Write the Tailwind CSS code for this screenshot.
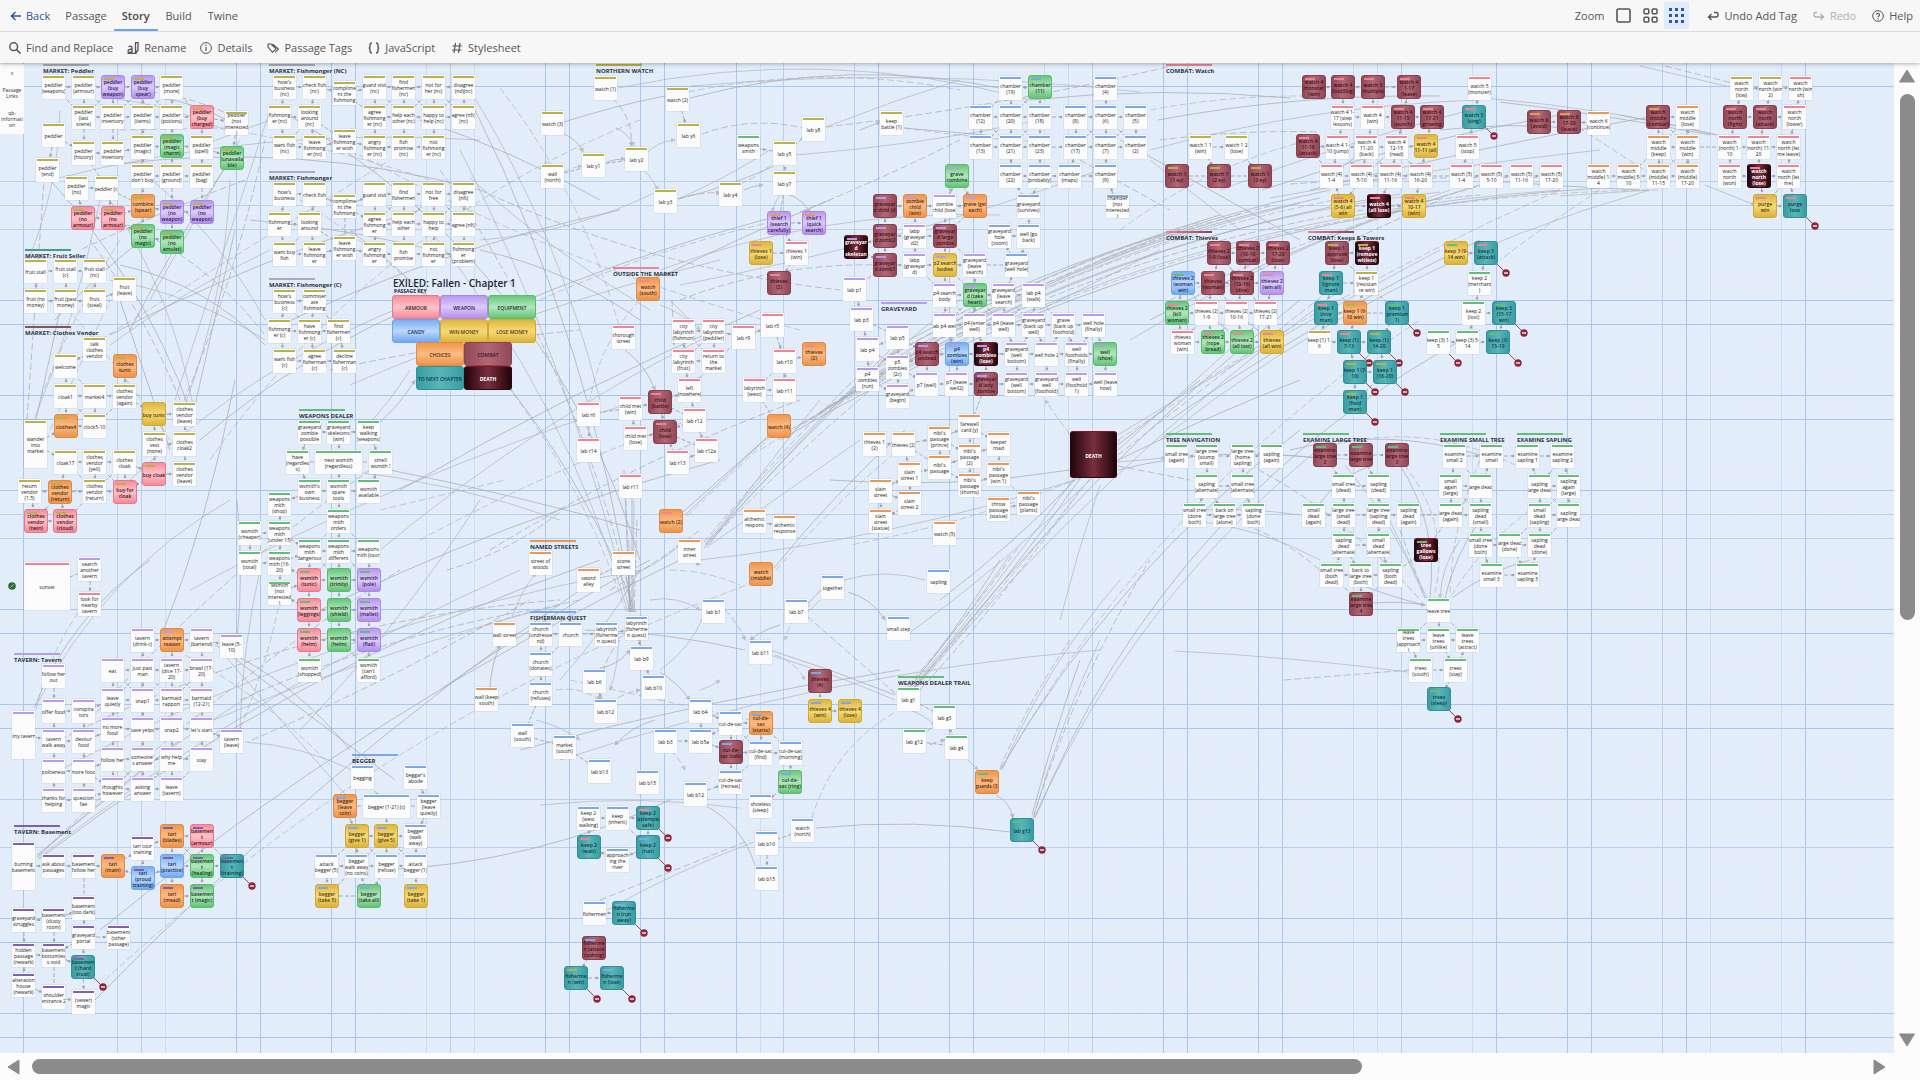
<!DOCTYPE html>
<html lang="en">
<head>
<meta charset="utf-8">
<title>EXILED: Fallen - Chapter 1</title>
<script src="https://cdn.jsdelivr.net/npm/@tailwindcss/browser@4"></script>
</head>
<body class="flex h-screen flex-col overflow-hidden bg-[#f7f7f7] font-['Open_Sans','Noto_Sans',sans-serif] text-[11px] leading-4 text-[#555]">
<header class="relative z-10 bg-[#f7f7f7] shadow-[0_1px_4px_rgba(0,0,0,0.3)]">
  <div class="flex h-8 items-stretch justify-between border-b border-[#dcdcdc]">
    <nav class="flex items-stretch pl-0.5">
      <button class="flex items-center gap-1 px-2 text-[#2f5592]">
        <svg class="size-3" viewBox="0 0 12 12" fill="none" stroke="currentColor" stroke-width="1.5"><path d="M11 6H1.5M5.5 2L1.5 6l4 4"/></svg>Back</button>
      <button class="px-[7px]">Passage</button>
      <button class="border-b-2 border-[#6ba3ee] px-2 pt-0.5 font-semibold text-[#4a4a4a]">Story</button>
      <button class="px-2">Build</button>
      <button class="px-2">Twine</button>
    </nav>
    <div class="flex items-stretch">
      <span class="flex items-center pr-1.5">Zoom</span>
      <button class="px-1.5" aria-label="Show large passages"><svg class="size-[15px]" viewBox="0 0 15 15" fill="none" stroke="#555" stroke-width="1.6"><rect x="1" y="1" width="13" height="13" rx="1.5"/></svg></button>
      <button class="px-1.5" aria-label="Show medium passages"><svg class="size-[15px]" viewBox="0 0 15 15" fill="none" stroke="#555" stroke-width="1.5"><rect x="1" y="1" width="4.8" height="4.8" rx="1"/><rect x="9.2" y="1" width="4.8" height="4.8" rx="1"/><rect x="1" y="9.2" width="4.8" height="4.8" rx="1"/><rect x="9.2" y="9.2" width="4.8" height="4.8" rx="1"/></svg></button>
      <button class="my-0.5 bg-[#e0ecfb] px-[5px]" aria-label="Show small passages"><svg class="size-[15px]" viewBox="0 0 15 15" fill="#2a56a5"><path d="M0 0h3v3H0zM6 0h3v3H6zM12 0h3v3h-3zM0 6h3v3H0zM6 6h3v3H6zM12 6h3v3h-3zM0 12h3v3H0zM6 12h3v3H6zM12 12h3v3h-3z"/></svg></button>
      <button class="ml-2.5 flex items-center gap-[5px] px-2"><svg class="size-3" viewBox="0 0 12 12" fill="none" stroke="currentColor" stroke-width="1.4"><path d="M4.5 4L1.5 7l3 3M1.5 7H9a2 2 0 0 0 2-2V4a1.500 1.500 0 0 0-1.500-1.500H7"/></svg>Undo Add Tag</button>
      <button disabled class="flex items-center gap-[5px] px-2 text-[#b0b0b0]"><svg class="size-3" viewBox="0 0 12 12" fill="none" stroke="currentColor" stroke-width="1.4"><path d="M7.500 4l3 3-3 3M10.500 7H3a2 2 0 0 1-2-2V4a1.500 1.500 0 0 1 1.500-1.500H4"/></svg>Redo</button>
      <button class="flex items-center gap-[5px] pr-[7px] pl-2"><svg class="size-3" viewBox="0 0 12 12" fill="none" stroke="currentColor"><circle cx="6" cy="6" r="5.300"/><path d="M4.500 4.800a1.500 1.500 0 1 1 2 1.500q-.5.200-.5.900M6 8.200v1.200" stroke-width="1.100"/></svg>Help</button>
    </div>
  </div>
  <div class="flex h-[31px] items-stretch pl-0.5">
    <button class="flex items-center gap-[5px] px-[7px]"><svg class="size-3" viewBox="0 0 12 12" fill="none" stroke="currentColor" stroke-width="1.5"><circle cx="4.700" cy="4.700" r="3.900"/><path d="M7.600 7.600l4 4"/></svg>Find and Replace</button>
    <button class="flex items-center gap-[5px] px-[7px]"><svg class="size-3" viewBox="0 0 12 12" fill="none" stroke="currentColor" stroke-width="1.3"><path d="M1.500 4.600q3.500-1 3.500 1v5M5 7.300q-4-.3-4 1.700 0 1.500 1.700 1.500Q5 10.500 5 8.500M.5 11.300h8.500V8.500M8.500.7H11v7.600L9 10.500H8.500z"/></svg>Rename</button>
    <button class="flex items-center gap-[5px] px-[7px]"><svg class="size-3" viewBox="0 0 12 12" fill="none" stroke="currentColor"><circle cx="6" cy="6" r="5.400"/><path d="M6 5v4M6 2.800v1.200" stroke-width="1.200"/></svg>Details</button>
    <button class="flex items-center gap-[5px] px-2"><svg class="size-3" viewBox="0 0 12 12" fill="none" stroke="currentColor" stroke-width="1.100"><path d="M1 2v3l4.500 5.300L9 6.800 4 2zM5.500 2l6 5L8 10.300M3 4v.3"/></svg>Passage Tags</button>
    <button class="flex items-center gap-[5px] px-2"><svg class="size-3" viewBox="0 0 12 12" fill="none" stroke="currentColor" stroke-width="1.300"><path d="M4 1Q2 1 2 3v1.500Q2 6 .7 6 2 6 2 7.500V9q0 2 2 2M8 1q2 0 2 2v1.500Q10 6 11.300 6 10 6 10 7.500V9q0 2-2 2"/></svg>JavaScript</button>
    <button class="flex items-center gap-[5px] px-2"><svg class="size-3" viewBox="0 0 12 12" fill="none" stroke="currentColor" stroke-width="1.200"><path d="M4.500 1L3 11M9 1L7.500 11M1.500 4H11M1 8h9.500"/></svg>Stylesheet</button>
  </div>
</header>

<div class="flex min-h-0 flex-1">
  <main id="board" class="relative min-w-0 flex-1 overflow-hidden bg-[#e4eefb]">
    <svg class="absolute inset-0 size-full" aria-hidden="true">
      <defs><pattern id="fine" width="23.75" height="23.75" patternUnits="userSpaceOnUse"><path d="M4.750 0V23.750M9.500 0V23.750M14.250 0V23.750M19 0V23.750M0 4.750H23.750M0 9.500H23.750M0 14.250H23.750M0 19H23.750" stroke="#d9e5f6" stroke-width="1"/></pattern>
      <marker id="tip" viewBox="0 0 6 6" refX="5" refY="3" markerWidth="5" markerHeight="5" orient="auto"><path d="M0 0L6 3L0 6z" fill="#a9adb6"/></marker></defs>
      <rect width="100%" height="100%" fill="url(#fine)" opacity="0.3"/>
      <g id="grid"></g><g id="links" fill="none" stroke="#a9acb3"></g>
    </svg>
  </main>
  <div class="flex w-[26px] flex-col items-center bg-[#fcfcfc]" aria-hidden="true">
    <svg class="mt-1.5 h-[15px] w-4" viewBox="0 0 16 15" fill="#8b8b8b"><path d="M8 1L15.500 13H.5z" stroke="#8b8b8b" stroke-linejoin="round"/></svg>
    <div class="mt-2.5 h-[526px] w-[15px] rounded-full bg-[#8b8b8b]"></div>
    <svg class="mt-auto mb-1.5 h-[15px] w-4" viewBox="0 0 16 15" fill="#8b8b8b"><path d="M8 14L15.500 2H.5z" stroke="#8b8b8b" stroke-linejoin="round"/></svg>
  </div>
</div>
<footer class="flex h-[27px] items-center bg-[#fcfcfc] pr-[33px] pl-1.5" aria-hidden="true">
  <svg class="h-4 w-[15px]" viewBox="0 0 15 16" fill="#8b8b8b"><path d="M2 8L13 1V15z" stroke="#8b8b8b" stroke-linejoin="round"/></svg>
  <div class="ml-[11px] flex-1"><div class="h-[15px] w-[72.3%] rounded-full bg-[#8b8b8b]"></div></div>
  <svg class="h-4 w-[15px]" viewBox="0 0 15 16" fill="#8b8b8b"><path d="M13 8L2 1V15z" stroke="#8b8b8b" stroke-linejoin="round"/></svg>
</footer>

<script>
const TOP = 63, board = document.getElementById('board');

// Major grid lines: position, strength
const vert = '24:3 118:2 142:2 166:1 237:3 261:3 332:3 356:3 427:1 451:2 475:1 546:3 570:3 641:3 665:3 737:3 761:1 784:2 855:2 879:3 950:3 974:3 1045:1 1069:1 1093:2 1164:3 1188:3 1259:3 1283:3 1354:1 1378:1 1402:2 1473:1 1497:3 1568:3 1592:3 1663:2 1687:3 1711:1 1782:1 1806:3';
const horz = '86:3 181:2 205:2 229:2 300:3 324:3 395:3 419:3 490:3 514:2 538:2 609:3 633:3 704:3 728:3 799:2 847:2 918:3 942:3 1013:3 1037:3';
const tone = {1:'#ccdcf2',2:'#b9cfee',3:'#a9c6ec'};
let g = '';
vert.split(' ').forEach(s=>{const [p,k]=s.split(':'); g+=`<path d="M${+p-.5} 0V2000" stroke="${tone[k]}"/>`});
horz.split(' ').forEach(s=>{const [p,k]=s.split(':'); g+=`<path d="M0 ${p-TOP+.5}H4000" stroke="${tone[k]}"/>`});
document.getElementById('grid').innerHTML = g;

const skin = {
  w:'bg-[#fbfbfb] text-[#1e1e1e] shadow-[0_0_1px_rgba(0,0,0,0.25)] font-medium',
  r:'rounded-[3px] border border-[#e8788a] bg-linear-to-b from-[#f58e9c] via-[#fcc3ca] to-[#f48999] text-[#3d1218] font-semibold',
  p:'rounded-[3px] border border-[#ad87e6] bg-linear-to-b from-[#ba98ee] via-[#dccbfa] to-[#b48fec] text-[#2c1a4d] font-semibold',
  g:'rounded-[3px] border border-[#58bd6c] bg-linear-to-b from-[#67c77a] via-[#b4e5bd] to-[#62c376] text-[#123a1b] font-semibold',
  b:'rounded-[3px] border border-[#6fa5ec] bg-linear-to-b from-[#79adf2] via-[#bcd8fb] to-[#70a7f0] text-[#142c50] font-semibold',
  y:'rounded-[3px] border border-[#d3a92f] bg-linear-to-b from-[#dcb640] via-[#f7da76] to-[#dbb33a] text-[#4b390b] font-semibold',
  o:'rounded-[3px] border border-[#e08a43] bg-linear-to-b from-[#ee974e] via-[#fbbb83] to-[#ec934b] text-[#522a0c] font-semibold',
  d:'rounded-[3px] border border-[#86404f] bg-linear-to-r from-[#914857] via-[#b26775] to-[#914857] text-[#3c101a] font-semibold',
  t:'rounded-[3px] border border-[#318f96] bg-linear-to-r from-[#3a9da4] via-[#58b5b8] to-[#3a9da4] text-[#0e3a40] font-semibold',
  k:'rounded-[3px] border border-[#2c0810] border-t-[#8a1420] bg-linear-to-r from-[#23060c] via-[#7a2f3e] to-[#23060c] text-white font-bold'
};
const bar = {
  y:'bg-[#b9b149]', p:'bg-[#b99bec]', g:'bg-[#64bd78]', r:'bg-[#ef8593]', o:'bg-[#e8995a]', b:'bg-[#7ba8e8]', v:'bg-[#7f5fae]'
};
const nodes = [];
// region(originX, originY, rows): "x,y skin+bar text", positions in thirds of a pixel from the origin
function region(ox, oy, data) {
  data.trim().split('|').forEach(s => {
    const m = s.trim().match(/^(\d+),(\d+) (\w)(\w) ?(\d+x\d+)? ?(.*)$/s);
    if (!m) return;
    const [w,h] = m[5] ? m[5].split('x').map(Number) : [24,24];
    nodes.push({x:Math.round(ox+m[1]/3), y:Math.round(oy+m[2]/3), k:m[3], s:m[4], w, h, t:m[6].trim()});
  });
}
region(0,0,`125,225 wy peddler (weapons)|215,225 wy peddler (armour)|303,225 py peddler (buy weapon)|393,225 py peddler (buy spear)|481,225 wy peddler (more)|
215,316 wy peddler (last scene)|303,316 wy peddler inventory|393,316 wy peddler (items)|481,316 wy peddler (potions)|570,314 ro peddler (buy charged)|675,333 wy peddler (not interested)|
125,369 wy peddler|215,423 wy peddler (history)|303,423 wy peddler inventory|393,404 wy peddler (magic)|481,402 gy peddler (magic charm)|570,404 wy peddler (spell)|660,438 gy peddler (unavailable)|107,475 wy peddler (end)|
393,492 wy peddler (don't buy)|481,492 wy peddler (ground)|570,492 wy peddler (bag)|196,528 wy peddler (no)|285,528 wy peddler (c)|393,583 oy combine (spear)|214,617 ry peddler (no armour)|303,617 ry peddler (no armour)|481,600 py peddler (no weapon)|570,600 py peddler (no weapon)|393,672 gy peddler (no magic)|481,690 gy peddler (no amulet)|
820,225 wy how's business (nc)|908,225 wy check fish (nc)|1000,243 wy compliment the fishmong|1088,225 wy guard visit (nc)|1177,225 wy find fishermen (nc)|1267,225 wy not for her (nc)|1356,225 wy disagree (nd)(nc)|
803,316 wy fishmong er (nc)|893,316 wy looking around (nc)|1088,316 wy agree fishmong er (nc)|1177,316 wy help each other (nc)|1267,316 wy happy to help (nc)|1356,316 wy agree (nft) (nc)|
820,404 wy want fish (nc)|908,404 wy leave fishmong er (nc)|1000,387 wy leave fishmong er wish|1088,404 wy angry fishmong er (nc)|1177,404 wy fish promise (nc)|1267,404 wy not fishmong er (nc)|
820,547 wy how's business|908,547 wy check fish|1000,583 wy compliment the fishmong|1088,547 wy guard visit|1177,547 wy find fishermen|1267,547 wy not for free|1356,547 wy disagree (nft)|
803,636 wy fishmong er|893,636 wy looking around|1088,636 wy agree fishmong er|1177,636 wy help each other|1267,636 wy happy to help|1356,636 wy agree (nft)|
820,725 wy want buy fish|908,725 wy leave fishmong er|1000,709 wy leave fishmong er wish|1088,725 wy angry fishmong er|1177,725 wy fish promise|1267,725 wy not fishmong er|1356,725 wy fishmong er (problem)`);
region(0,240,`72,58 wy fruit stall|161,58 wy fruit stall (c)|249,58 wy fruit stall (nc)|72,148 wy fruit (no money)|161,148 wy fruit (past money)|249,148 wy fruit (steal)|338,111 wy fruit (leave)|
249,290 wy talk clothes vendor|161,343 wy welcome|338,343 oy clothes tunic|161,432 wy cloak1|249,432 wy market4|338,432 wy clothes vendor (again)|427,487 yy buy tunic|519,487 wy clothes vendor (leave)|
72,540 wy 24x48 wander into market|161,522 oy clothes4|249,522 wy clock5-10|430,576 wy clothes vest (none)|519,576 wy clothes cloak2|161,630 wy cloak17|249,630 wy clothes vendor (yell)|338,630 wy clothes cloak|427,665 ry buy cloak|519,665 wy clothes vendor (leave)|
54,717 wy return vendor (1,5)|143,719 oy clothes vendor (return)|249,717 wy clothes vendor (return)|338,719 ry buy for cloak|72,808 ry clothes vendor (twin)|160,808 ry clothes vendor (cloud)|
820,148 wy how's business (c)|908,148 wy commiser ate fishmong|803,237 wy fishmong er (c)|893,237 wy have fishmong er (c)|981,237 wy find fishermen (c)|820,326 wy want fish (c)|908,326 wy agree fisherman (c)|1000,326 wy decline fisherman (c)|
893,541 wg graveyard zombie possible|981,541 wg graveyard skeletons (win)|1071,541 wg keep walking (weapons)|857,630 wg have (regardless)|946,630 wg 48x24 next wsmith (regardless)|1106,630 wg smell wsmith !|
893,717 wg wsmith's own business|981,717 wg wsmith spare tools|1071,717 wg wsmith available|803,755 wg weapons mith (shop)|981,808 wg weapons mith orders|714,843 wg wsmith (cheaper)|803,843 wg weapons mith (under 15)|893,897 wg weapons mith dangerous|981,897 wg weapons mith different|1071,897 wg weapons mith (tour)`);
region(0,540,`714,32 wg wsmith (total)|803,32 wg weapons mith (16-20)|803,122 wg wsmith (not interested)|
891,85 rg wsmith (tunic)|981,85 gg wsmith (trinity)|1070,85 pg wsmith (pole)|891,174 rg wsmith (leggings)|981,174 gg wsmith (shield)|1070,174 pg wsmith (mallet)|891,263 rg wsmith (helm)|981,263 gg wsmith (helm)|1070,263 pg wsmith (flail)|893,353 wg wsmith (shopped)|1070,353 wg wsmith (can't afford)|
72,66 wr 47x48 sunset|233,50 wp search another tavern|233,157 wr look for nearby tavern|127,372 wp follow her out|393,265 wp tavern (drink-c)|481,264 op attempt reason|571,265 wp tavern (bartend)|660,283 wp leave (5-10)|
303,353 wp eat|393,353 wp just past man|481,353 wp tavern (dice 17-20)|571,353 wp brawl (17-20)|303,443 wp leave quietly|393,443 wp snap1|481,443 wp barmaid rapport|571,443 wp barmaid (12-21)|
127,478 wp offer food|215,478 wp conspira tors|36,514 wp 24x48 tiny tavern|303,532 wp no more food|393,532 wp save yelps|481,532 wp snap2|571,532 wp let's start|127,568 wp tavern walk away|215,568 wp devour food|660,568 wp tavern (leave)|
303,622 wp follow her|393,622 wp someone's answer|481,622 wp why help me|571,622 wp stay|127,657 wp politeness|215,657 wp more food|303,710 wp thoughts however|393,710 wp asking answer|481,710 wp leave (tavern)|127,745 wp thanks for helping|215,745 wp question fae|
36,907 wv 24x48 burning basement|127,942 wv ask about passages|215,942 wv basement follow her|303,941 ov tari (main)|393,889 wv tari tour training|393,977 bv tari (proud training)|481,853 ov tari (blades)|571,853 rv basement (armour)|481,942 bv tari (practice)|571,942 gv basement (healing)|660,942 tv basement (training)|481,1031 ov tari (mead)|571,1031 gv basement (magic)|
36,1103 wv graveyard struggles|127,1103 wv basement (dusty room)|215,1067 wv basement (too dark)|215,1156 wv graveyard portal|322,1156 wv basement (other passage)|36,1210 wv hidden passage (newark)|127,1210 wv basement bottomless void|214,1244 tv basement (hard trust)|36,1298 wv alteration house (newark)|127,1334 wv shoulder entrance 2|215,1351 wv (sewer) magic|
1053,675 wb begging|1212,675 wb beggar's abode|998,763 ob begger (leave coin)|1089,763 wb 48x24 begger (1-21) (c)|1250,763 wb begger (leave quietly)|1034,853 yb begger (give 1)|1123,853 yb begger (give 5)|1212,853 wb begger (walk away)|945,942 wb attack begger (5)|1035,942 wb beggar walk away (no coins)|1124,942 wb begger (refuse)|1213,942 wb attack begger (1)|945,1031 yb begger (take 5)|1071,1031 gb begger (take all)|1213,1031 yb begger (take 1)`);
region(480,0,`342,227 wy watch (1)|557,262 wy watch (2)|182,334 wy watch (3)|182,492 wy wall (north)|307,458 wy lab y1|434,440 wy lab y2|592,370 wy lab y6|522,566 wy lab y3|716,547 wy lab y4|878,512 wy lab y7|878,423 wy lab y5|967,352 wy lab y8|1199,334 wy keep battle (1)|771,406 wg weapons smith|
861,633 po thief 1 (search carefully)|967,633 po thief 1 (quick search)|807,724 yr thieves 1 (lose)|914,724 wr thieves 1 (win)|861,813 dr thieves (2)|1092,706 kp graveyar d skeleton|1180,582 dp graveyar d child (d)|1270,582 op zombie child (win)|1359,583 wp zombie child (lose)|1180,671 dp graveyar d zomb2|1270,671 wp labp (graveyar d2)|1359,671 dp graveyar d large zombie|1180,760 dp graveyar d zomb1|1270,760 wp labp (graveyar d)|1359,760 yp p2 search bodies|1395,492 gp grave combine|468,830 or watch (south)`);
region(800,180,`130,292 wp lab p1|150,382 wp lab p3|167,470 wp lab p4|167,560 wp p4 zombies (run)|258,436 wp lab p5|258,524 wp p5 zombies (2c)|258,612 wp graveyard (begin)|398,310 wp p4 search body|488,310 gp graveyar d (take heart)|577,310 wp graveyard (leave search)|667,310 wp lab p4 (walk)|
398,400 wp lab p4 well|488,400 wp p4 (enter well)|577,400 wp p4 (leave well)|667,400 wp graveyard (back up well)|757,400 wp grave (back up foothold)|846,400 wp well hole (finally)|345,487 dp p4 search undead|435,487 bp p4 zombies (win)|523,487 kp p4 zombies (lose)|616,487 wp graveyard (well bottom)|705,487 wp well hole 2|795,487 wp well footholds (finally)|880,487 gp well (shoe)|
345,577 wp p7 (well)|435,577 wp p7 (leave well2)|523,577 dp graveyar d lady zombie|616,577 wp graveyard (well bottom)|705,577 wp graveyard well (foothold)|795,577 wp well (foothold 1)|883,577 wp well (leave now)|488,220 wp graveyard (leave search)|614,220 wb graveyard (well hole)|563,132 wb graveyard hole (zoom)|652,132 wb well (go back)|652,43 wb graveyard (survives)|918,43 wb chamber (not interested)|488,43 op grave (get each)|
188,756 wo thieves 1 (2)|277,756 wo thieves (2)|383,738 wo nibi's passage (prince)|473,702 wo farewell card (y)|562,756 wo keeper road|473,792 wo nibi's passage (2)|383,826 wo nibi's passage|562,845 wo nibi's passage (win 1)|293,845 wo slain street 1|473,880 wo nibi's passage (thorns)|206,898 wo slain street|293,933 wo slain street 2|206,988 wo slain street (statue)|562,951 wo throw passage (statue)|652,933 wo nibi's passage (plants)|398,1023 wo watch (5)|810,754 kk 47x47 DEATH`);
region(960,0,`116,227 wb chamber (19)|204,225 gb chamber (11)|403,227 wb chamber (4)|27,316 wb chamber (12)|116,316 wb chamber (20)|204,316 wb chamber (18)|312,316 wb chamber (8)|403,316 wb chamber (6)|492,316 wb chamber (5)|27,404 wb chamber (13)|116,404 wb chamber (21)|204,404 wb chamber (23)|312,404 wb chamber (17)|403,404 wb chamber (7)|492,404 wb chamber (2)|116,492 wb chamber (22)|204,492 wb chamber (probably)|294,492 wb chamber (maps)|403,492 wb chamber (9)|
687,404 wy watch 1 1 (win)|794,404 wy watch 1 2 (lose)|615,492 dy watch 1 (1 ey)|740,492 dy watch 1 (2 ey)|865,492 dy watch 1 (3 ey)|
1025,225 dr watch 4 (monster) (win)|1114,225 dr watch 4 (lost)(big)|1203,225 dr watch 5 (multiple)|1310,225 dr watch 4 1-17 (leave)|1114,316 wr watch 4 1-17 (step lessons)|1203,316 wr watch 4 (win)|1292,314 dr watch 4 11-15 (punch)|1381,314 dr watch 4 17-21 growing|1008,403 dr watch 4 11-16 (attack)|1097,404 wr watch 4 1-10 (jump)|1186,404 wr watch 4 11-20 (back)|1274,404 wr watch 4 12-15 (read)|1363,403 yr watch 4 11-11 (all)|1080,492 wr watch (4) 1-4|1169,492 wr watch (4) 5-10|1257,492 wr watch (4) 11-16|1347,492 wr watch (4) 16-20|1114,582 yr watch 4 (5-6) all win|1221,582 kr watch 4 (all lose)|1327,582 yr watch 4 10-17 (win)`);
region(1440,0,`84,227 wr watch 5 (monster)|65,314 tr watch 5 (sing)|47,404 wr watch 5 (stop)|30,492 wr watch (5) 1-4|120,492 wr watch (5) 5-10|209,492 wr watch (5) 11-16|299,492 wr watch (5) 17-20|262,331 do watch 6 (avoid)|351,331 do watch 6 17-20 (leave)|440,334 wo watch 6 (continue)|619,314 do watch middle (combat)|708,316 wo watch middle (lose)|620,404 wo watch middle (keep)|708,404 wo watch middle (win)|441,492 wo watch (middle) 1-4|530,492 wo watch (middle) 5-10|620,492 wo watch (middle) 11-15|708,492 wo watch (middle) 17-20|
870,227 wy watch north (low)|958,227 wy watch north (win 2)|1047,227 wr watch north (win sh)|850,314 dr watch north (fight)|940,314 dr watch north (attack)|1030,316 wr watch north (lower)|833,404 wr watch (north) 1-10|922,404 wr watch (north) 11-20|1012,404 wr watch north (let me leave)|833,492 wr watch north (won)|921,492 kr watch north (lose)|1012,492 wr watch north (let me)|940,582 yr purge win|1029,582 tr purge lose`);
region(1150,220,`170,64 dr thieves 2 1-9 (lose)|259,64 dr thieves 2 (10-16 combat)|348,64 dr thieves 2 17-20 (lose)|63,153 bg thieves 2 (woman win)|152,153 dr thieves (woman)|241,153 dr thieves 2 (10-16) (dice)|331,153 pr thieves 2 (win all)|45,242 gr thieves 2 (kill woman)|135,242 wr thieves (2) 1-9|224,242 wr thieves (2) 10-16|313,242 wr thieves (2) 17-21|63,331 wr thieves woman (win)|152,331 gr thieves 2 (rope bread)|241,331 gr thieves 2 (all lost)|330,331 yr thieves (all win)|
526,64 dy keep 1 approve (lose)|615,64 ky keep 1 (remove witless)|508,153 tr keep 1 (ignore man)|615,153 wy keep 1 (resistan ce win)|491,242 tr keep 1 (nice man)|580,242 oy keep 1 (6-10 win)|705,242 tg keep 1 (premium 1)|473,331 wy keep (1) 1-6|562,331 tr keep (1) 7-13|652,331 ty keep (1) 14-20|580,421 ty keep 1 (7-10)|669,421 ty keep 1 (16-20)|580,510 ty keep 1 (field man)|883,64 yg keep 3 (9-14 win)|972,64 tr keep 3 (attack)|954,153 wg keep 2 (merchant)|937,242 wg keep 2 (lost)|1025,242 tg keep 3 (15-17 win)|830,331 wg keep (3) 1-5|919,331 wg keep (3) 5-14|1008,331 tg keep (3) 15-19|
45,672 wg small tree (again)|134,672 wg large tree (stump small)|242,672 wg large tree (home sapling)|331,672 wg sapling (again)|134,761 wg sapling (alternate)|242,761 wg small tree (alternate)|99,850 wg small tree (done both)|188,850 wg back on large tree (alone)|277,850 wg sapling (done both)|
490,670 dg examine large tree 2|597,670 dg examine large tree|704,670 dg examine large tree 3|879,672 wg examine small 2|990,672 wg examine small|1097,672 wg examine sapling 1|1204,672 wg examine sapling 2|545,761 wg small tree (dead)|652,761 wg sapling (dead)|866,761 wg small again (large)|956,761 wg large dead|1134,761 wg sapling large dead|1222,761 wg sapling again (large)|
455,850 wg small dead (again)|545,850 wg large tree (small dead)|652,850 wg large tree (sapling dead)|740,850 wg sapling dead (again)|866,850 wg large dead (again)|956,850 wg sapling dead (small)|1134,850 wg small dead (sapling)|1222,850 wg sapling large dead|545,939 wg sapling dead (alternate)|652,939 wg small dead (alternate)|956,939 wg small tree (done both)|1045,939 wg large dead (done)|1134,939 wg sapling dead (done)|793,954 kg tree gallows (lose)|
509,1028 wg small tree (both dead)|598,1028 wg back to large tree (both)|687,1028 wg sapling (both dead)|990,1028 wg examine small 3|1097,1028 wg examine sapling 3|597,1117 dg examine large tree 4|830,1135 wg leave tree|740,1225 wg leave trees (approach)|830,1225 wg leave trees (unlike)|919,1225 wg leave trees (attract)|776,1314 wg trees (south)|883,1314 wg trees (stay)|830,1402 tg trees (sleep)`);
region(440,570,`786,86 wb lab b1|1034,86 wb lab b7|928,211 wb lab b11|1144,14 wb together|267,157 wb church (undresse nd)|357,157 wb church|465,157 wb labyrinth (fisherme n quest)|554,139 wb labyrinth (fisherme n quest)|267,245 wb church (donates)|267,335 wb church (refuses)|571,228 wb lab b9|428,298 wb lab b6|606,316 wb lab b10|463,388 wb lab b12|748,388 wb lab b4|838,424 wb cul-de-sac|927,422 ob cul-de-sac (starts)|643,478 wb lab b3|748,478 wb lab b5a|837,510 db cul-de-sac (talk)|927,513 wb cul-de-sac (find)|1017,513 wb cul-de-sac (morning)|
213,460 wb wall (south)|338,496 wb market (south)|445,568 wb lab b13|588,601 wb lab b15|731,637 wb lab b12|838,601 wb cul-de-sac (retreat)|1015,601 gb cul-de-sac (ring)|927,673 wb shoeless (sleep)|1052,745 wb watch (north)|945,782 wb lab b16|945,887 wb lab b15|410,709 wb keep 2 (west walking)|499,709 wb keep (inherit)|588,708 tr keep 2 (attempts safe)|410,796 tr keep 2 (wait)|588,796 tb keep 2 (run)|499,834 wb approach ing the river|428,994 wb fishermen|516,994 tb fisherme n (run away)|427,1099 db fisherme n (attack rushing)|373,1188 ty fisherme n (win)|481,1188 tb fisherme n (lose)|159,157 wo wall street|106,352 wo wall (keep south)|1104,298 db thieves (4)|1104,388 yb thieves 4 (win)`);
region(760,560,`234,417 yb thieves 4 (lose)|501,26 wb sapling|380,169 wb small step|411,382 wg lab g1|518,436 wg lab g3|429,507 wg lab g12|554,525 wg lab g4|644,630 og keep guards (3)|751,774 tg lab g13`);
region(380,260,`695,196 wr thorough street|876,178 wr city labyrinth (fishmon)|965,178 wr city labyrinth (peddler)|1055,195 wr lab r9|1142,160 wr lab r5|1178,267 wr lab r10|1267,247 or thieves (2)|876,266 wr city labyrinth (fruit)|965,266 wr return to the market|893,355 wr left (nowhere)|1090,355 wr labyrinth (west)|1178,355 wr lab r11|716,409 wr child met (win)|804,391 dr child (battle)|820,480 dr child (lose)|733,498 wr child met (lose)|910,445 wr lab r12|590,427 wr lab r6|590,535 wr lab r14|946,535 wr lab r12a|858,570 wr lab r13|716,642 wr lab r11|838,747 or watch (2)|1160,462 oo watch (4)|893,838 wo inner street|1088,748 wo alchemic respons|1178,766 wo alchemic response|1106,907 oo watch (middle)|447,872 wo street of woods|590,925 wo sword alley|697,872 wo stone street|
36,105 rr 48x24 ARMOUR|180,105 pp 48x24 WEAPON|323,105 gg 48x24 EQUIPMENT|36,176 bb 48x24 CANDY|180,176 yy 48x24 WIN MONEY|323,176 yy 48x24 LOSE MONEY|108,247 oo 48x24 CHOICES|251,247 dd 48x24 COMBAT|108,318 tt 48x24 TO NEXT CHAPTER|251,318 kk 48x24 DEATH`);

// Links: neighbouring passages, then long routes as x1 y1 x2 y2 bend
const isKey = n => n.k === n.s && n.w === 48;
let paths = '';
nodes.forEach((a,i) => nodes.forEach((b,j) => {
  if (j<=i || isKey(a) || isKey(b)) return;
  const ax=a.x+a.w/2, ay=a.y+a.h/2-TOP, bx=b.x+b.w/2, by=b.y+b.h/2-TOP, d=Math.hypot(ax-bx,ay-by);
  if (d < 34 || (d < 46 && (i+j)%2)) {
    paths += `<path d="M${ax} ${ay}L${bx} ${by}" stroke-dasharray="4 2"/>`;
    if (d < 38) { const t=15/d, s=(i+j)%2?1:-1; const px=s>0?bx-(bx-ax)*t:ax+(bx-ax)*t, py=s>0?by-(by-ay)*t:ay+(by-ay)*t; paths += `<circle cx="${px}" cy="${py}" r="1.300" fill="#9fa3ab" stroke="none"/>`; }
  }
}));
const routes = `500 88 620 330 -.1;475 110 632 612 -.08;460 150 630 612 -.06;440 170 634 612 -.1;430 230 628 612 -.1;350 230 636 612 -.14;300 200 626 612 -.18;280 110 640 560 -.2;470 90 600 400 -.08;480 190 840 290 .08;470 178 650 310 .05;
624 470 630 612 0;626 500 631 612 0;632 480 632 612 0;634 500 633 612 0;637 520 634 612 0;629 540 629 612 0;628 560 630 612 0;
350 150 800 330 .06;480 250 640 320 -.1;616 128 634 146 -.2;612 98 631 146 -.25;618 88 1030 100 -.12;564 122 665 96 -.03;688 92 960 90 -.1;690 98 1010 90 -.12;691 86 1140 92 -.05;702 134 803 128 -.15;646 154 675 140 -.2;564 134 583 152 -.2;564 172 582 166 -.1;607 162 625 159 -.1;644 170 658 190 -.1;678 199 720 193 -.1;678 199 770 150 .04;678 199 774 166 .05;740 184 776 160 .1;744 190 763 185 -.1;826 127 960 80 -.02;826 127 1180 64 .03;796 155 1030 122 .03;904 128 985 135 0;904 128 1040 142 .02;790 195 810 213 -.2;780 195 772 212 .1;800 212 960 140 .02;
480 240 660 190 .1;480 320 770 218 -.04;540 300 780 220 -.05;665 275 830 200 -.02;680 285 1100 170 .04;680 300 880 265 -.1;660 270 1000 215 -.1;860 130 880 122 0;640 300 590 400 .15;625 350 655 390 -.15;670 300 700 330 0;672 300 674 345 0;660 305 690 322 -.1;
900 345 1180 230 -.06;890 355 1200 222 -.05;880 362 1220 215 -.06;870 372 1240 214 -.06;862 382 1270 206 -.08;850 390 1300 203 -.08;840 400 1320 198 -.1;830 405 1350 197 -.1;820 412 1400 194 -.1;810 420 1440 192 -.12;800 425 1480 195 -.12;790 430 1560 190 -.12;780 440 1600 188 -.12;760 450 1660 190 -.14;705 545 905 340 -.02;706 546 890 350 -.02;704 542 880 355 -.03;707 548 820 400 -.02;685 515 775 430 0;687 516 778 430 0;683 512 782 424 0;705 544 960 300 -.06;704 548 1000 290 -.05;710 545 860 440 0;774 568 905 430 -.04;776 570 910 440 -.04;
908 690 1000 560 .03;909 688 1010 555 .02;907 686 1020 545 .03;910 690 1080 470 .02;911 690 1090 465 .03;912 690 1120 440 .02;913 690 1300 300 -.06;914 690 1340 290 -.06;1000 768 1070 640 -.05;1002 770 1120 580 -.08;1000 770 1300 430 -.1;1002 768 1420 320 -.12;1032 815 1080 660 -.02;1034 815 1100 640 -.04;1033 818 1150 560 -.06;1034 818 1330 440 -.12;1035 818 1480 330 -.18;
1118 440 1180 400 0;1118 445 1200 380 0;1118 450 1240 340 0;1118 455 1330 290 0;1118 435 1440 250 -.02;1118 460 1300 380 -.02;1070 435 1045 400 0;1118 470 1330 460 -.1;1118 462 1165 458 0;1118 466 1190 480 0;1090 480 900 640 -.04;1075 480 940 600 -.04;1080 478 850 545 -.05;1070 470 830 480 -.06;1075 480 700 560 -.05;1080 490 920 690 -.03;1100 485 1060 620 .02;
1030 100 1290 98 -.05;1150 110 1310 96 -.05;1158 120 1440 96 -.05;1150 150 1480 100 -.06;1160 140 1320 132 -.04;1220 190 1470 110 -.03;1262 190 1560 115 -.04;1120 230 1310 140 -.1;1100 260 1330 190 -.05;1040 310 1160 250 0;1080 160 1170 210 0;1150 160 1240 230 0;1120 140 1300 240 0;1170 300 1500 180 -.04;1150 320 1480 185 -.05;1130 340 1450 190 -.05;1290 184 1560 178 -.02;1270 198 1600 150 -.02;1310 190 1660 115 -.02;1190 390 1560 190 -.04;1170 420 1480 240 -.04;1160 440 1650 190 -.1;1330 250 1440 200 0;
1485 98 1740 140 -.04;1500 102 1710 135 -.02;1570 122 1660 180 0;1620 115 1715 135 -.02;1640 66 1735 88 0;1665 66 1760 90 0;1705 185 1755 205 0;1570 128 1440 130 .05;1600 190 1500 260 .02;1480 180 1640 190 .01;1560 196 1650 190 0;
1284 680 1410 670 0;1175 651 1408 672 -.02;1374 603 1425 605 -.06;1315 450 1515 465 -.2;1290 450 1480 455 -.14;1280 455 1360 460 0;1240 460 1420 600 -.1;1345 465 1425 598 -.08;1400 465 1430 597 -.18;1404 465 1434 597 -.25;1370 466 1310 520 .2;1380 500 1427 598 0;1400 530 1425 598 0;1460 540 1440 598 .15;1480 520 1445 598 .1;1530 510 1450 598 .1;1530 560 1452 598 .1;1320 560 1190 520 .1;1245 525 1325 575 -.1;1300 515 1200 510 .05;1350 580 1425 605 .05;1480 460 1450 597 .1;
37 855 180 740 0;38 856 260 690 -.05;37 857 400 570 -.05;38 858 520 570 -.06;39 859 600 560 -.08;36 710 80 610 -.1;34 708 150 560 -.15;36 706 230 500 -.15;60 740 560 600 -.1;60 770 640 570 -.08;100 930 680 560 -.06;105 980 760 580 -.1;95 1000 580 590 -.05;190 730 560 605 -.04;240 700 530 610 -.06;220 650 350 800 0;230 655 395 780 0;185 655 330 765 -.08;215 645 350 750 -.12;245 742 352 770 -.1;252 740 530 600 .03;260 570 240 730 .05;237 640 237 500 .05;240 728 280 600 .05;
160 640 235 380 .05;190 590 640 400 -.05;90 720 370 470 -.06;130 480 420 300 -.1;200 440 430 300 -.08;210 460 640 120 -.15;270 330 620 210 -.06;24 270 60 110 .1;27 420 44 180 0;30 430 100 200 .05;36 420 60 310 0;50 430 110 300 0;190 410 50 180 .1;194 410 110 200 .1;180 400 90 240 .06;185 405 230 180 .08;195 405 235 230 0;170 440 60 300 .03;170 450 120 300 0;175 400 270 110 0;180 410 265 140 .05;
110 345 270 250 -.05;110 335 420 210 -.05;100 340 390 160 0;120 265 265 345 -.15;110 280 265 340 -.1;90 210 265 335 -.15;140 170 265 320 -.1;155 230 55 320 .05;120 240 40 400 .05;230 160 130 330 .03;240 140 150 300 0;245 180 80 250 .02;50 180 480 140 -.08;110 165 480 190 -.1;230 130 430 180 -.04;250 220 470 260 -.05;190 150 270 120 0;130 90 230 115 -.1;110 98 225 130 -.08;160 98 230 122 -.1;120 130 225 128 0;
390 470 640 530 -.02;340 470 560 520 -.06;330 370 580 330 -.03;350 385 720 260 -.04;400 490 760 310 -.03;420 540 690 420 -.04;370 430 415 380 .1;365 428 410 370 .05;490 550 800 400 -.05;380 550 720 330 -.06;300 620 720 460 -.05;380 510 505 480 0;420 120 600 200 -.05;300 730 480 500 .05;
447 570 560 512 .1;512 618 536 573 -.1;490 690 500 645 -.1;448 640 580 600 -.05;440 690 650 560 -.03;560 680 640 570 .05;620 640 600 700 .2;618 638 610 690 -.1;600 668 630 650 .2;556 690 600 700 -.2;660 672 690 700 -.1;700 690 720 680 .1;618 698 640 690 -.1;536 720 580 740 -.1;655 720 615 745 .15;670 750 685 770 -.1;780 625 750 640 .1;704 615 660 670 -.15;725 610 745 640 -.1;650 600 700 610 -.2;585 630 745 650 -.05;
775 655 805 680 -.2;770 650 895 695 -.02;770 655 895 700 -.03;800 610 897 695 0;844 580 925 580 -.15;848 592 885 620 -.2;810 605 785 640 .2;804 608 830 580 0;820 600 795 620 -.1;610 590 700 530 .03;630 575 680 545 .1;690 560 700 565 0;670 570 740 585 -.1;380 870 670 800 .1;540 805 740 808 -.06;600 900 750 840 0;607 910 754 842 -.04;706 806 755 865 -.2;812 818 897 711 -.2;816 828 1010 832 -.06;910 710 935 725 -.1;930 745 945 740 -.1;968 760 978 770 0;996 795 1013 818 -.25;570 680 750 720 0;520 750 900 670 -.03;560 760 1100 650 -.06;`;
routes.split(';').forEach((r,i) => {
  const v = r.trim().split(/\s+/).map(Number); if (v.length < 5) return;
  const [x1,a,x2,b,k]=v, y1=a-TOP, y2=b-TOP, mx=(x1+x2)/2-(y2-y1)*k, my=(y1+y2)/2+(x2-x1)*k;
  paths += `<path d="M${x1} ${y1}Q${mx} ${my} ${x2} ${y2}" ${i%3 ? '' : 'stroke-dasharray="7 3"'} ${Math.hypot(x2-x1,y2-y1)<70 ? 'marker-end="url(#tip)"' : ''} opacity="${i%2?'.75':'.6'}"/>`;
});
const stops = [[252,886],[103,987],[1494,136],[1815,226],[1417,333],[1369,363],[1399,363],[1375,392],[1405,392],[1375,422],[1506,273],[1524,333],[1458,363],[1518,363],[1458,719],[668,838],[668,868],[644,933],[597,999],[632,999],[1042,850]];
stops.forEach(([x,y]) => paths += `<path d="M${x} ${y-TOP}l-10 -10" stroke="#93485a"/><circle cx="${x}" cy="${y-TOP}" r="3.700" fill="#8c2638" stroke="none"/><path d="M${x-2} ${y-TOP}h4" stroke="#fff" stroke-width="1.300"/>`);
paths += `<circle cx="12" cy="${586-TOP}" r="3.800" fill="#2c6f35" stroke="none"/><path d="M10.500 ${587.5-TOP}l3 -3" stroke="#9fd0a5"/>`;
document.getElementById('links').innerHTML = paths;

function add(cls, x, y, w, h, html) {
  const el = document.createElement('div');
  el.className = 'absolute ' + cls;
  el.style.cssText = `left:${x}px;top:${y-TOP}px;` + (w ? `width:${w}px;height:${h}px` : '');
  el.innerHTML = html; board.append(el);
}
nodes.forEach(n => {
  const plain = n.k === 'w';
  const strip = plain ? `<i class="absolute inset-x-px top-px h-0.5 ${bar[n.s]}"></i>`
    : (bar[n.s] && n.s !== n.k ? `<i class="absolute left-0.5 top-0.5 h-0.5 w-2.5 ${bar[n.s]}"></i>` : '');
  add('flex items-center justify-center overflow-hidden pt-0.5 text-center text-[5px] leading-[6px] ' + skin[n.k],
    n.x, n.y, plain ? n.w-1 : n.w, n.h, strip + `<span class="w-[calc(100%+2px)] shrink-0 wrap-anywhere">${n.t}</span>`);
});
add('flex flex-col items-center justify-around bg-[#fbfbfb] text-center text-[5px] leading-[6px] text-[#333]', 0, 64, 24, 70, '<span>x</span><span>Passage<br>Links</span><span>qb-<br>informati<br>on</span>');

const headBar = {a:'bg-[#a9adb8]', t:'bg-[#4c9a80]', n:'bg-[#80584c]', m:'bg-linear-to-r from-[#ef8593] to-[#8f4453]', ...bar};
[[43,64,'a','MARKET: Peddler'],[269,64,'a','MARKET: Fishmonger (NC)'],[25,249,'t','MARKET: Fruit Seller'],[269,171,'a','MARKET: Fishmonger'],[269,278,'a','MARKET: Fishmonger (C)'],[25,326,'n','MARKET: Clothes Vendor'],[299,409,'g','WEAPONS DEALER'],[14,653,'p','TAVERN: Tavern'],[14,825,'v','TAVERN: Basement'],[352,754,'b','BEGGER'],[596,64,'y','NORTHERN WATCH'],[613,267,'r','OUTSIDE THE MARKET'],[1166,64,'r','COMBAT: Watch'],[1166,231,'m','COMBAT: Thieves'],[1308,231,'m','COMBAT: Keeps & Towers'],[881,302,'p','GRAVEYARD'],[530,540,'o','NAMED STREETS'],[530,611,'b','FISHERMAN QUEST'],[898,676,'g','WEAPONS DEALER TRAIL'],[1166,433,'g','TREE NAVIGATION'],[1303,433,'g','EXAMINE LARGE TREE'],[1440,433,'g','EXAMINE SMALL TREE'],[1517,433,'g','EXAMINE SAPLING']]
.forEach(([x,y,c,t]) => add('whitespace-nowrap text-[6px] leading-[7px] font-bold text-[#2b3240]', x, y, 0, 0, `<i class="mb-0.5 block h-0.5 w-[46px] ${headBar[c]}"></i>${t}`));
add('whitespace-nowrap text-[10px] leading-3 font-semibold text-[#1c2430]', 393, 277, 0, 0, 'EXILED: Fallen - Chapter 1');
add('whitespace-nowrap text-[5px] leading-[6px] font-bold text-[#1c2430]', 394, 288, 0, 0, 'PASSAGE KEY');
</script>
</body>
</html>
